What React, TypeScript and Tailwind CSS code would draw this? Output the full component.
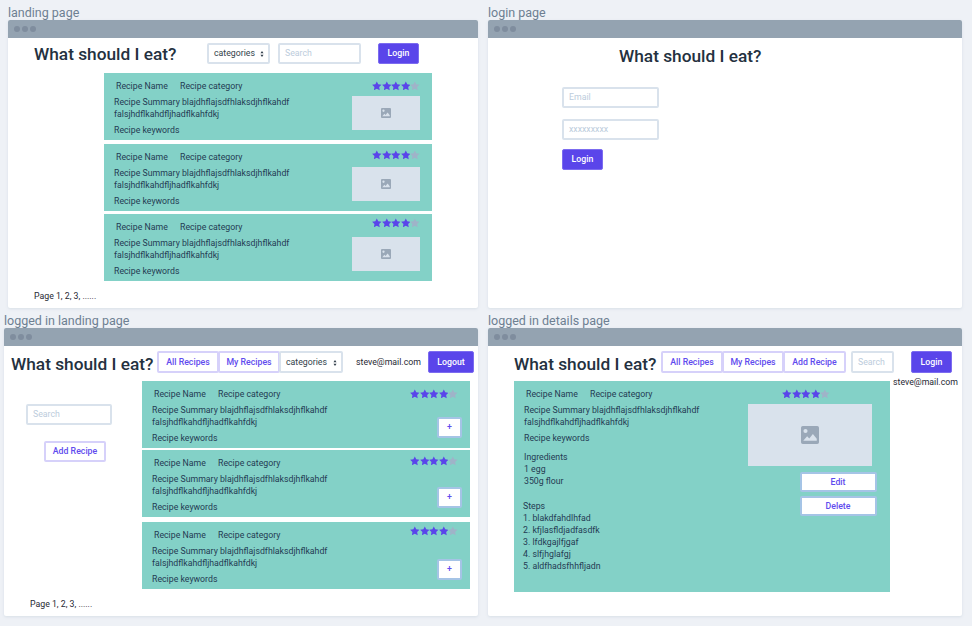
import React from "react";

const Star = ({ on }: { on: boolean }) => (
  <svg viewBox="0 0 20 20" className={on ? "w-[10px] h-[10px] fill-[#5a45ea]" : "w-[10px] h-[10px] fill-[#9fb3c8]"}>
    <path d="M10 0.4l3 6.1 6.8 1-4.9 4.7 1.2 6.7L10 15.7l-6.1 3.2 1.2-6.7L.2 7.5l6.8-1z" />
  </svg>
);

const Stars = () => (
  <div className="flex w-[48px] justify-between">
    <Star on />
    <Star on />
    <Star on />
    <Star on />
    <Star on={false} />
  </div>
);

const ImageBox = ({ big }: { big?: boolean }) => (
  <div className={big ? "flex h-[62px] w-[124px] items-center justify-center bg-[#d9e2ec]" : "flex h-[34px] w-[68px] items-center justify-center bg-[#d9e2ec]"}>
    <svg viewBox="0 0 20 20" className={big ? "w-[18px] h-[18px]" : "w-[10px] h-[10px]"}>
      <path fill="#9aa8b8" fillRule="evenodd" d="M2 0h16a2 2 0 0 1 2 2v16a2 2 0 0 1-2 2H2a2 2 0 0 1-2-2V2a2 2 0 0 1 2-2zm3 3.2a2.3 2.3 0 1 0 0 4.6 2.3 2.3 0 0 0 0-4.6zM2.5 16.5h15v-2.2l-4.3-5.5-4 5-2.4-2.4z" />
    </svg>
  </div>
);

const Chevrons = () => (
  <svg viewBox="0 0 6 10" className="h-[6px] w-[4px] fill-[#323f4b]">
    <path d="M3 0l2.6 3.6H.4zM3 10L.4 6.4h5.2z" />
  </svg>
);

const Window = ({ className, children }: { className: string; children: React.ReactNode }) => (
  <div className={`h-[288px] bg-white shadow-[0_1px_3px_rgba(98,125,152,0.15)] rounded-[2px] overflow-hidden ${className}`}>
    <div className="flex h-[18px] items-center gap-[2px] bg-[#94a3b1] pl-[6px]">
      <span className="h-[6px] w-[6px] rounded-full bg-[#7f8d9e]" />
      <span className="h-[6px] w-[6px] rounded-full bg-[#7f8d9e]" />
      <span className="h-[6px] w-[6px] rounded-full bg-[#7f8d9e]" />
    </div>
    {children}
  </div>
);

const Label = ({ children }: { children: string }) => (
  <div className="h-[20px] pt-[5px] text-[12.5px] leading-[16px] text-[#6d7f92]">{children}</div>
);

const Title = () => (
  <h1 className="whitespace-nowrap text-[17.3px] font-medium leading-[22px] text-[#243140]">What should I eat?</h1>
);

const Primary = ({ children, className }: { children: string; className: string }) => (
  <button className={`flex h-[21px] items-center justify-center rounded-[2px] border border-[#7c6cf0] bg-[#5a45ea] pt-[1px] text-[8.75px] font-medium text-white ${className}`}>
    {children}
  </button>
);

const Outline = ({ children, className }: { children: string; className: string }) => (
  <button className={`flex h-[21px] items-center justify-center rounded-[2px] border-2 border-[#d6d1fa] bg-white pt-[1px] text-[8.75px] font-medium text-[#5f4bee] ${className}`}>
    {children}
  </button>
);

const Field = ({ text, className }: { text: string; className: string }) => (
  <div className={`flex h-[21px] items-center rounded-[2px] border-2 border-[#d9e2ec] bg-white pl-[5px] pt-[1px] text-[8.75px] text-[#bcccdc] ${className}`}>
    {text}
  </div>
);

const Select = ({ className }: { className: string }) => (
  <div className={`flex h-[21px] items-center justify-between rounded-[2px] border-2 border-[#d9e2ec] bg-white pl-[5px] pr-[4px] pt-[1px] text-[8.75px] text-[#323f4b] ${className}`}>
    categories
    <Chevrons />
  </div>
);

const CardText = () => (
  <>
    <div className="flex pl-[2px] pt-[7px] leading-[12px]">
      <span className="w-[64px]">Recipe Name</span>
      <span>Recipe category</span>
    </div>
    <p className="mt-[4px] leading-[12px]">
      Recipe Summary blajdhflajsdfhlaksdjhflkahdf
      <br />
      falsjhdflkahdfljhadflkahfdkj
    </p>
    <p className="mt-[4px] leading-[12px]">Recipe keywords</p>
  </>
);

// the stars sit a little higher on the lower cards
const rowClasses = [
  { top: "pt-[8px]", image: "mt-[5px]", plus: "mt-[18px]" },
  { top: "pt-[6px]", image: "mt-[7px]", plus: "mt-[21px]" },
  { top: "pt-[4px]", image: "mt-[9px]", plus: "mt-[23px]" },
];

const Card = ({ row, plus, className }: { row: number; plus?: boolean; className: string }) => (
  <div className={`flex h-[67px] w-[328px] justify-between bg-[#83d1c7] pl-[10px] pr-[12px] text-[8.75px] text-[#243b53] ${className}`}>
    <div>
      <CardText />
    </div>
    <div className={`flex flex-col items-end ${rowClasses[row].top}`}>
      <Stars />
      {plus ? (
        <button className={`mr-[-4px] flex h-[21px] w-[25px] items-center justify-center rounded-[2px] border-2 border-[#a5c4e6] bg-white text-[8.75px] font-medium text-[#5f4bee] ${rowClasses[row].plus}`}>
          +
        </button>
      ) : (
        <div className={rowClasses[row].image}>
          <ImageBox />
        </div>
      )}
    </div>
  </div>
);

const PageNumbers = ({ className }: { className: string }) => (
  <p className={`text-[8.75px] leading-[12px] text-[#1f2933] ${className}`}>Page 1, 2, 3, ......</p>
);

export default function App() {
  return (
    <div className="h-[626px] w-[972px] overflow-hidden bg-[#eef1f6] font-['Roboto',sans-serif]">
      <div className="flex gap-[10px] pl-[8px]">
        <div>
          <Label>landing page</Label>
          <Window className="w-[470px]">
            <div className="flex items-start pl-[26px] pt-[5px]">
              <div className="flex h-[21px] w-[173px] items-center pt-[1px]">
                <Title />
              </div>
              <Select className="w-[63px]" />
              <Field text="Search" className="ml-[8px] w-[83px]" />
              <Primary className="ml-[17px] w-[41px]">Login</Primary>
            </div>
            <div className="ml-[96px] mt-[9px]">
              <Card row={0} className="" />
              <Card row={1} className="mt-[4px]" />
              <Card row={2} className="mt-[3px]" />
            </div>
            <PageNumbers className="ml-[26px] mt-[9px]" />
          </Window>
        </div>
        <div>
          <Label>login page</Label>
          <Window className="w-[474px]">
            <div className="ml-[131px] pt-[7px]">
              <Title />
            </div>
            <div className="ml-[74px] mt-[20px]">
              <Field text="Email" className="w-[97px]" />
              <Field text="xxxxxxxxx" className="mt-[11px] w-[97px]" />
              <Primary className="mt-[9px] w-[41px]">Login</Primary>
            </div>
          </Window>
        </div>
      </div>
      <div className="flex gap-[10px] pl-[4px]">
        <div>
          <Label>logged in landing page</Label>
          <Window className="w-[474px]">
            <div className="flex items-start pl-[7px] pt-[5px]">
              <div className="flex h-[22px] w-[146px] items-center pt-[4px]">
                <Title />
              </div>
              <Outline className="!h-[22px] w-[62px]">All Recipes</Outline>
              <Outline className="!h-[22px] w-[62px] ml-[-1px]">My Recipes</Outline>
              <Select className="!h-[22px] ml-[-1px] w-[64px]" />
              <div className="ml-[13px] flex h-[22px] w-[72px] items-center pt-[1px] text-[8.75px] text-[#1f2933]">steve@mail.com</div>
              <Primary className="!h-[22px] w-[46px]">Logout</Primary>
            </div>
            <div className="mt-[8px] flex">
              <div className="w-[138px]">
                <Field text="Search" className="ml-[22px] mt-[23px] w-[86px]" />
                <Outline className="ml-[40px] mt-[16px] w-[62px]">Add Recipe</Outline>
              </div>
              <div>
                <Card row={0} plus className="" />
                <Card row={1} plus className="mt-[2px]" />
                <Card row={2} plus className="mt-[5px]" />
              </div>
            </div>
            <PageNumbers className="ml-[26px] mt-[9px]" />
          </Window>
        </div>
        <div>
          <Label>logged in details page</Label>
          <Window className="w-[474px]">
            <div className="flex items-start pl-[26px] pt-[5px]">
              <div className="flex h-[22px] w-[147px] items-center pt-[4px]">
                <Title />
              </div>
              <Outline className="!h-[22px] w-[62px]">All Recipes</Outline>
              <Outline className="!h-[22px] w-[62px] ml-[-1px]">My Recipes</Outline>
              <Outline className="!h-[22px] w-[63px] ml-[-1px]">Add Recipe</Outline>
              <Field text="Search" className="!h-[22px] ml-[5px] w-[43px]" />
              <Primary className="!h-[22px] ml-[17px] w-[41px]">Login</Primary>
            </div>
            <div className="flex">
              <div className="ml-[26px] mt-[8px] flex h-[211px] w-[376px] justify-between bg-[#83d1c7] pl-[10px] pr-[18px] text-[8.75px] text-[#243b53]">
                <div>
                  <CardText />
                  <p className="mt-[7px] leading-[12px]">
                    Ingredients
                    <br />1 egg
                    <br />
                    350g flour
                  </p>
                  <p className="ml-[-1px] mt-[13px] leading-[12px]">
                    Steps
                    <br />1. blakdfahdlhfad
                    <br />2. kfjlasfldjadfasdfk
                    <br />3. lfdkgajlfjgaf
                    <br />4. slfjhglafgj
                    <br />5. aldfhadsfhhfljadn
                  </p>
                </div>
                <div className="flex w-[124px] flex-col items-center pt-[8px]">
                  <div className="mr-[8px]">
                    <Stars />
                  </div>
                  <div className="mt-[5px]">
                    <ImageBox big />
                  </div>
                  <button className="ml-[56px] mt-[6px] flex h-[20px] w-[77px] shrink-0 items-center justify-center rounded-[2px] border-2 border-[#a5c4e6] bg-white pt-[1px] text-[8.75px] font-medium text-[#5f4bee]">
                    Edit
                  </button>
                  <button className="ml-[56px] mt-[4px] flex h-[20px] w-[77px] shrink-0 items-center justify-center rounded-[2px] border-2 border-[#a5c4e6] bg-white pt-[1px] text-[8.75px] font-medium text-[#5f4bee]">
                    Delete
                  </button>
                </div>
              </div>
              <div className="ml-[3px] mt-[3px] h-[12px] text-[8.75px] leading-[12px] text-[#1f2933]">steve@mail.com</div>
            </div>
          </Window>
        </div>
      </div>
    </div>
  );
}
